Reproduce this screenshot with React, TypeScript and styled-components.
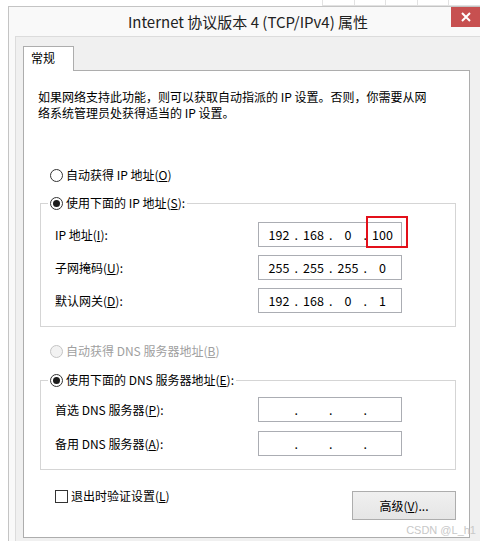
import * as React from 'react'
import styled, { createGlobalStyle } from 'styled-components'

const GlobalStyle = createGlobalStyle`
  * { box-sizing: border-box; }
  html, body {
    margin: 0;
    padding: 0;
    background: #fff;
    overflow: hidden;
  }
  body {
    font-family: "Noto Sans CJK SC", "Noto Sans", sans-serif;
    font-size: 12px;
    color: #000;
  }
`

const Page = styled.div`
  position: relative;
  width: 480px;
  height: 541px;
  overflow: hidden;
`

// strip of the window lying behind the dialog
const Backdrop = styled.div`
  height: 6px;
  display: flex;
  padding-left: 322px;
`

const BackdropCell = styled.div`
  width: 33px;
  height: 6px;
  border-left: 1px solid #e2e2e2;
  border-bottom: 1px solid #e2e2e2;
`

const Window = styled.div`
  width: 481px;
  margin-left: 8px;
  border: 1px solid #c4c4c4;
  border-right: none;
  background: #f9f9f9;
  padding: 0 8px 0 6px;
`

const TitleBar = styled.div`
  height: 29px;
  display: grid;
  grid-template-columns: 30px 1fr 30px;
`

const Title = styled.div`
  grid-column: 2;
  align-self: center;
  text-align: center;
  font-size: 15px;
  color: #222;
  line-height: 20px;
  padding-top: 1px;
`

const CloseButton = styled.div`
  grid-column: 3;
  width: 30px;
  height: 20px;
  background: #c75050;
  display: flex;
  align-items: center;
  justify-content: center;
`

const Content = styled.div`
  border: 1px solid #dcdcdc;
  background: #f0f0f0;
  padding: 9px 9px 0 7px;
  height: 520px;
`

const Tab = styled.div`
  position: relative;
  z-index: 1;
  width: 51px;
  height: 25px;
  margin-bottom: -1px;
  border: 1px solid #adadad;
  border-bottom: none;
  background: #fff;
  padding-left: 7px;
  line-height: 22px;
`

const TabPanel = styled.div`
  width: 447px;
  height: 468px;
  border: 1px solid #adadad;
  background: #fff;
  display: flex;
  flex-direction: column;
`

const Intro = styled.p`
  margin: 0;
  padding: 18px 0 0 14px;
  line-height: 16px;
`

const ChoiceRow = styled.div<{ $top?: number; $disabled?: boolean }>`
  display: flex;
  align-items: center;
  gap: 3px;
  height: 16px;
  line-height: 16px;
  margin-top: ${p => p.$top ?? 0}px;
  margin-left: ${p => (p.$top === undefined ? 0 : 26)}px;
  color: ${p => (p.$disabled ? '#a0a0a0' : '#000')};
`

const Radio = styled.span<{ $checked?: boolean; $disabled?: boolean }>`
  width: 13px;
  height: 13px;
  flex-shrink: 0;
  border-radius: 50%;
  border: 1px solid ${p => (p.$disabled ? '#c4c4c4' : '#333')};
  background: ${p => (p.$disabled ? '#f2f2f2' : '#fff')};
  display: flex;
  align-items: center;
  justify-content: center;
  &::after {
    content: '';
    width: 7px;
    height: 7px;
    border-radius: 50%;
    background: #1c1c1c;
    display: ${p => (p.$checked ? 'block' : 'none')};
  }
`

const Key = styled.u`
  text-decoration: underline;
  text-underline-offset: 1px;
`

const Group = styled.fieldset<{ $top: number }>`
  width: 416px;
  margin: ${p => p.$top}px 0 0 16px;
  padding: 0;
  border: 1px solid #d5d5d5;
  min-inline-size: 0;
`

const GroupLegend = styled.legend`
  margin-left: 7px;
  padding: 0 2px;
`

const FieldGrid = styled.div<{ $pt: number; $pb: number; $gap: number }>`
  display: grid;
  grid-template-columns: 203px 144px;
  row-gap: ${p => p.$gap}px;
  align-items: center;
  padding: ${p => p.$pt}px 0 ${p => p.$pb}px 14px;
`

const FieldLabel = styled.div`
  line-height: 16px;
`

const IpBox = styled.div`
  position: relative;
  height: 25px;
  width: 144px;
  border: 1px solid #abadb3;
  background: #fff;
  padding-left: 5px;
  display: grid;
  grid-template-columns: 30px 4.5px 30px 4.5px 30px 4.5px 30px;
  align-items: center;
  font-size: 12.5px;
`

const Octet = styled.span`
  text-align: center;
`

const Dot = styled.span`
  text-align: center;
`

const Highlight = styled.div`
  position: absolute;
  left: 107px;
  top: -7px;
  width: 42px;
  height: 32px;
  border: 2px solid #e3101a;
`

const BottomRow = styled.div`
  display: flex;
  justify-content: space-between;
  align-items: flex-start;
  margin: 18px 13px 0 31px;
`

const CheckRow = styled.div`
  display: flex;
  align-items: center;
  gap: 3px;
  height: 16px;
  line-height: 16px;
`

const CheckBox = styled.span`
  width: 13px;
  height: 13px;
  border: 1px solid #333;
  background: #fff;
`

const Button = styled.div`
  margin-top: 3px;
  width: 104px;
  height: 29px;
  border: 1px solid #adadad;
  background: linear-gradient(#f0f0f0, #e5e5e5);
  display: flex;
  align-items: center;
  justify-content: center;
`

const Watermark = styled.div`
  position: absolute;
  right: 4px;
  bottom: 5px;
  font-family: "Liberation Sans", Arial, sans-serif;
  font-size: 11px;
  color: #c8c8c8;
`

const IpField = ({ parts, mark }: { parts: string[]; mark?: boolean }) => (
  <IpBox>
    {parts.map((p, i) => (
      <React.Fragment key={i}>
        {i > 0 && <Dot>.</Dot>}
        <Octet>{p}</Octet>
      </React.Fragment>
    ))}
    {mark && <Highlight />}
  </IpBox>
)

export default function App () {
  return (
    <Page>
      <GlobalStyle />
      <Backdrop>
        {[0, 1, 2, 3, 4].map(i => <BackdropCell key={i} />)}
      </Backdrop>
      <Window>
        <TitleBar>
          <Title>Internet 协议版本 4 (TCP/IPv4) 属性</Title>
          <CloseButton>
            <svg width='10' height='10' viewBox='0 0 10 10'>
              <path d='M1 1L9 9M9 1L1 9' stroke='#fff' strokeWidth='2' />
            </svg>
          </CloseButton>
        </TitleBar>
        <Content>
          <Tab>常规</Tab>
          <TabPanel>
            <Intro>
              如果网络支持此功能，则可以获取自动指派的 IP 设置。否则，你需要从网
              <br />
              络系统管理员处获得适当的 IP 设置。
            </Intro>

            <ChoiceRow $top={46}>
              <Radio />
              <span>自动获得 IP 地址(<Key>O</Key>)</span>
            </ChoiceRow>

            <Group $top={12}>
              <GroupLegend>
                <ChoiceRow>
                  <Radio $checked />
                  <span>使用下面的 IP 地址(<Key>S</Key>):</span>
                </ChoiceRow>
              </GroupLegend>
              <FieldGrid $pt={11} $pb={13} $gap={8}>
                <FieldLabel>IP 地址(<Key>I</Key>):</FieldLabel>
                <IpField parts={['192', '168', '0', '100']} mark />
                <FieldLabel>子网掩码(<Key>U</Key>):</FieldLabel>
                <IpField parts={['255', '255', '255', '0']} />
                <FieldLabel>默认网关(<Key>D</Key>):</FieldLabel>
                <IpField parts={['192', '168', '0', '1']} />
              </FieldGrid>
            </Group>

            <ChoiceRow $top={16} $disabled>
              <Radio $disabled />
              <span>自动获得 DNS 服务器地址(<Key>B</Key>)</span>
            </ChoiceRow>

            <Group $top={13}>
              <GroupLegend>
                <ChoiceRow>
                  <Radio $checked />
                  <span>使用下面的 DNS 服务器地址(<Key>E</Key>):</span>
                </ChoiceRow>
              </GroupLegend>
              <FieldGrid $pt={9} $pb={13} $gap={9}>
                <FieldLabel>首选 DNS 服务器(<Key>P</Key>):</FieldLabel>
                <IpField parts={['', '', '', '']} />
                <FieldLabel>备用 DNS 服务器(<Key>A</Key>):</FieldLabel>
                <IpField parts={['', '', '', '']} />
              </FieldGrid>
            </Group>

            <BottomRow>
              <CheckRow>
                <CheckBox />
                <span>退出时验证设置(<Key>L</Key>)</span>
              </CheckRow>
              <Button>高级(<Key>V</Key>)...</Button>
            </BottomRow>
          </TabPanel>
        </Content>
      </Window>
      <Watermark>CSDN @L_h1</Watermark>
    </Page>
  )
}
